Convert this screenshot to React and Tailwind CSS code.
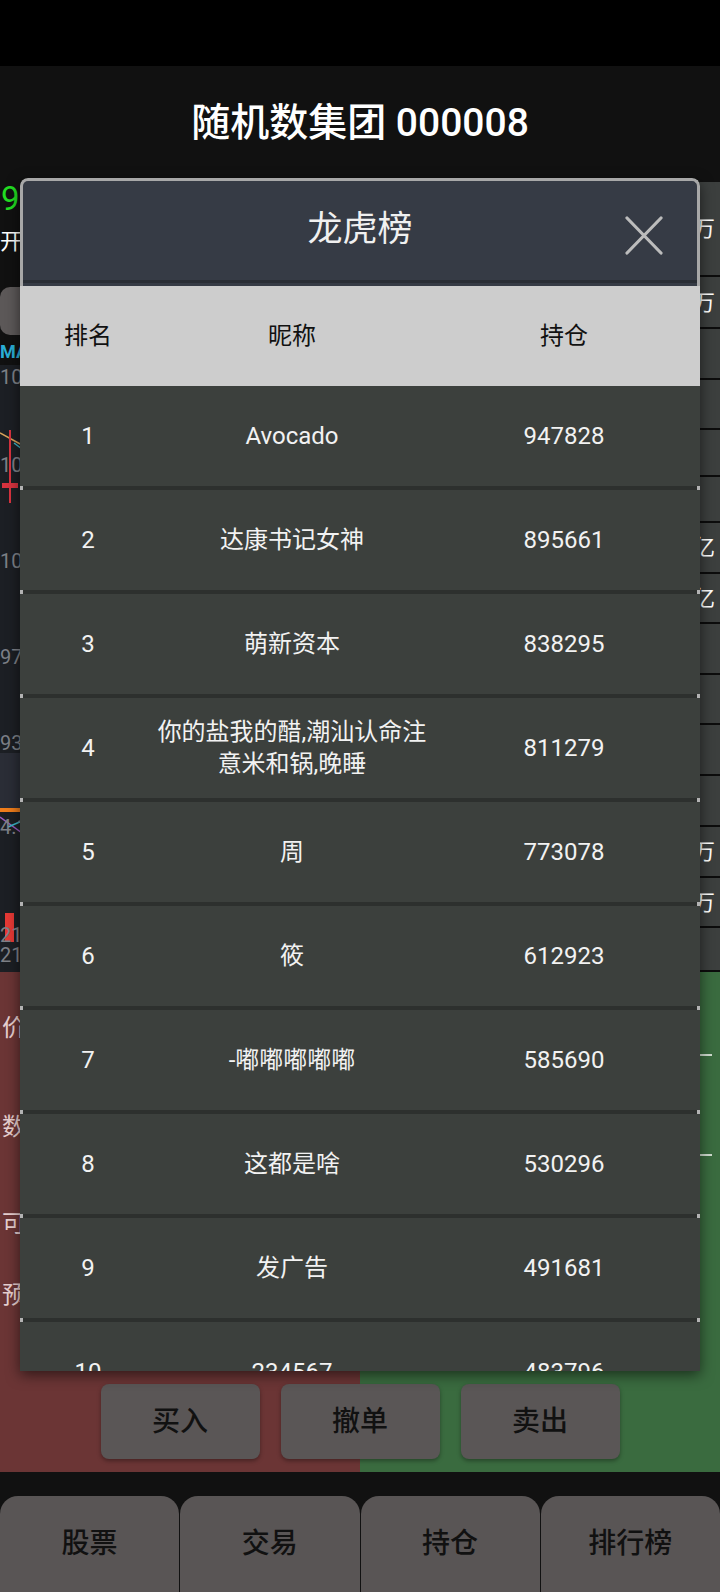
import React from "react";

const RANKS = [
  { rank: 1, name: "Avocado", hold: "947828" },
  { rank: 2, name: "达康书记女神", hold: "895661" },
  { rank: 3, name: "萌新资本", hold: "838295" },
  { rank: 4, name: "你的盐我的醋,潮汕认命注意米和锅,晚睡", hold: "811279" },
  { rank: 5, name: "周", hold: "773078" },
  { rank: 6, name: "筱", hold: "612923" },
  { rank: 7, name: "-嘟嘟嘟嘟嘟", hold: "585690" },
  { rank: 8, name: "这都是啥", hold: "530296" },
  { rank: 9, name: "发广告", hold: "491681" },
  { rank: 10, name: "234567", hold: "483796" },
];

// order book rows on the right, heights read off the screenshot
const BOOK = [
  { h: "h-[95px]", text: "卖5 98.40 1.26万" },
  { h: "h-[52px]", text: "卖4 98.35 3.08万" },
  { h: "h-[51px]", text: "" },
  { h: "h-[50px]", text: "" },
  { h: "h-[47px]", text: "" },
  { h: "h-[46px]", text: "" },
  { h: "h-[51px]", text: "成交额 12.6亿" },
  { h: "h-[50px]", text: "市值 98.3亿" },
  { h: "h-[51px]", text: "" },
  { h: "h-[50px]", text: "" },
  { h: "h-[51px]", text: "" },
  { h: "h-[51px]", text: "" },
  { h: "h-[51px]", text: "买4 98.10 2.11万" },
  { h: "h-[50px]", text: "买5 98.05 4.70万" },
  { h: "h-[44px]", text: "" },
];

const CHART_LABELS = [
  { top: "top-[0px]", text: "1035.20" },
  { top: "top-[88px]", text: "1012.46" },
  { top: "top-[184px]", text: "1001.73" },
  { top: "top-[280px]", text: "976.30" },
  { top: "top-[366px]", text: "931.85" },
  { top: "top-[450px]", text: "4.13万" },
  { top: "top-[558px]", text: "21.6万" },
  { top: "top-[578px]", text: "21.6万" },
];

function Separator() {
  return (
    <div className="flex h-[4px]">
      <div className="w-[3px] bg-[#b3b3b3]" />
      <div className="flex-1 bg-[#2d302e]" />
      <div className="w-[3px] bg-[#b3b3b3]" />
    </div>
  );
}

function Chart() {
  return (
    <div className="relative h-[607px] bg-[#1c1f24] overflow-hidden">
      <div className="absolute left-0 right-0 top-[388px] h-[55px] bg-[#2a2d36]" />
      <div className="absolute left-0 right-0 top-[443px] h-[4px] bg-[#ef7d1b]" />
      <svg className="absolute inset-0" width="480" height="607">
        <line x1="0" y1="68" x2="22" y2="80" stroke="#d9a35a" strokeWidth="1.5" />
        <line x1="14" y1="78" x2="22" y2="84" stroke="#3bb7c9" strokeWidth="1.5" />
        <line x1="10" y1="65" x2="10" y2="138" stroke="#d8333f" strokeWidth="2" />
        <rect x="2" y="118" width="16" height="5" fill="#d8333f" />
        <line x1="0" y1="452" x2="22" y2="468" stroke="#9a5bbf" strokeWidth="1.5" />
        <line x1="8" y1="462" x2="22" y2="456" stroke="#3bb7c9" strokeWidth="1.5" />
        <rect x="5" y="548" width="9" height="29" fill="#e53935" />
      </svg>
      {CHART_LABELS.map((l, i) => (
        <div
          key={i}
          className={`absolute left-0 ${l.top} text-[20px] leading-[24px] text-[#7d8087]`}
        >
          {l.text}
        </div>
      ))}
    </div>
  );
}

function RankDialog() {
  return (
    <div className="absolute left-[20px] top-[178px] w-[680px] h-[1193px] overflow-hidden rounded-t-[8px] shadow-[0_4px_14px_rgba(0,0,0,0.55)] bg-[#3c403d]">
      {/* title bar */}
      <div className="relative h-[108px] bg-[#363b45] border-[3px] border-b-0 border-[#a8a8a8] rounded-t-[8px]">
        <div className="flex items-center justify-center h-[102px] border-b-[3px] border-[#2a2e35]">
          <span className="text-[35px] text-[#f0f0f0]">龙虎榜</span>
        </div>
        <svg
          className="absolute right-[34px] top-[35px]"
          width="38"
          height="39"
          viewBox="0 0 38 39"
        >
          <line x1="2" y1="2" x2="36" y2="37" stroke="#bcbcbc" strokeWidth="3.2" strokeLinecap="round" />
          <line x1="36" y1="2" x2="2" y2="37" stroke="#bcbcbc" strokeWidth="3.2" strokeLinecap="round" />
        </svg>
      </div>

      {/* column header */}
      <div className="grid grid-cols-[1fr_2fr_2fr] h-[100px] bg-[#cdcdcd] text-[24px] text-[#111]">
        <div className="flex items-center justify-center">排名</div>
        <div className="flex items-center justify-center">昵称</div>
        <div className="flex items-center justify-center">持仓</div>
      </div>

      {RANKS.map((r) => (
        <div key={r.rank}>
          <div className="grid grid-cols-[1fr_2fr_2fr] h-[100px] bg-[#3c403d] text-[24px] text-[#f2f2f2]">
            <div className="flex items-center justify-center">{r.rank}</div>
            <div className="flex items-center justify-center text-center leading-[32px]">
              {r.name}
            </div>
            <div className="flex items-center justify-center">{r.hold}</div>
          </div>
          <Separator />
        </div>
      ))}
    </div>
  );
}

export default function App() {
  return (
    <div className="relative w-[720px] h-[1592px] overflow-hidden bg-[#111] font-[Roboto,'Noto_Sans_CJK_SC',sans-serif]">
      {/* status bar */}
      <div className="h-[66px] bg-black" />

      {/* title */}
      <div className="h-[106px] pt-[8px] flex items-center justify-center">
        <h1 className="text-[39px] font-medium text-white">随机数集团 000008</h1>
      </div>

      {/* quote + chart + order book */}
      <div className="flex h-[800px]">
        <div className="flex-1 flex flex-col">
          <div className="h-[54px] flex items-center pl-[1px] text-[33px] text-[#22dd22]">
            98.26 +2.35%
          </div>
          <div className="h-[30px] flex items-center text-[22px] text-white">
            开 96.10 高 99.02 低 95.88
          </div>
          <div className="mt-[31px] h-[48px] w-[200px] rounded-[10px] bg-[#5c5858]" />
          <div className="h-[30px] flex items-end pb-[4px] text-[18px] leading-none font-bold text-[#2aaed6]">
            MA5:1003.21 MA10:998.40
          </div>
          <Chart />
        </div>
        <div className="w-[240px] mt-[10px] bg-[#3c3f3e] flex flex-col">
          {BOOK.map((b, i) => (
            <div
              key={i}
              className={`${b.h} flex items-center justify-end pr-[5px] border-b-[2px] border-[#0c0c0c] text-[22px] text-white`}
            >
              {b.text}
            </div>
          ))}
        </div>
      </div>

      {/* trade panel */}
      <div className="h-[500px] bg-[linear-gradient(to_right,#6b3535_50%,#3a6b3f_50%)] flex flex-col">
        <div className="h-[412px] grid grid-cols-2">
          <div className="flex flex-col pl-[2px] text-[24px] leading-[24px] text-[#e7cfcf]">
            <div className="mt-[44px]">价格</div>
            <div className="mt-[75px]">数量</div>
            <div className="mt-[73px]">可买 0</div>
            <div className="mt-[47px]">预估 0.00</div>
          </div>
          <div className="flex flex-col">
            <div className="mt-[82px] ml-auto mr-[8px] w-[13px] h-[2px] bg-[#cfdccf]" />
            <div className="mt-[98px] ml-auto mr-[8px] w-[13px] h-[2px] bg-[#cfdccf]" />
          </div>
        </div>
        <div className="flex justify-center gap-[21px]">
          {["买入", "撤单", "卖出"].map((t) => (
            <button
              key={t}
              className="w-[159px] h-[75px] rounded-[8px] bg-[#5a5656] text-[28px] font-medium text-[#111] shadow-[0_2px_4px_rgba(0,0,0,0.35)]"
            >
              {t}
            </button>
          ))}
        </div>
      </div>

      {/* bottom nav */}
      <div className="h-[24px] bg-[#111]" />
      <div className="grid grid-cols-4 gap-[1px] h-[96px]">
        {["股票", "交易", "持仓", "排行榜"].map((t) => (
          <button
            key={t}
            className="rounded-t-[18px] bg-[#595555] text-[28px] font-medium text-[#111]"
          >
            {t}
          </button>
        ))}
      </div>

      <RankDialog />
    </div>
  );
}
